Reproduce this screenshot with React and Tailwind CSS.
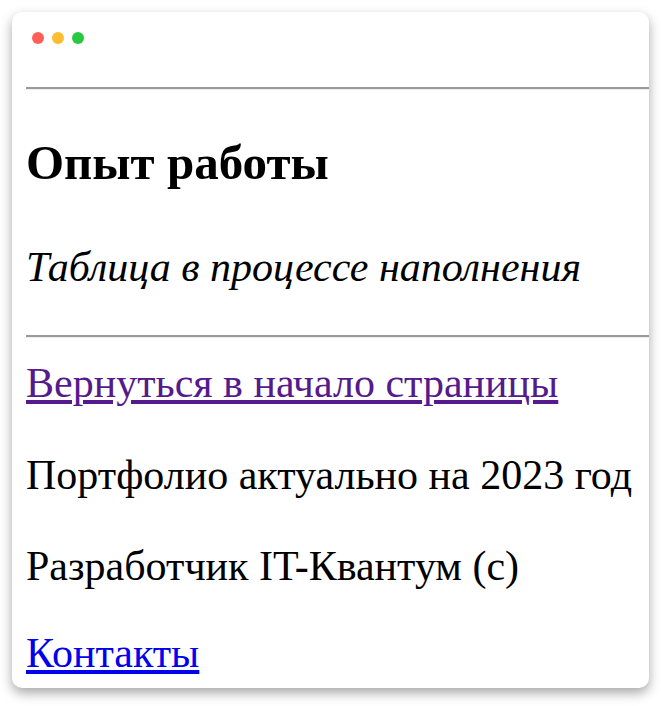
export default function App() {
  return (
    <div className="min-h-screen bg-white p-3 font-['Liberation_Serif','Times_New_Roman',serif] text-black">
      <div className="h-[676px] w-[637px] overflow-hidden rounded-[10px] bg-white shadow-[0_5px_12px_rgba(0,0,0,0.35)]">
        {/* title bar */}
        <div className="flex gap-2 pl-5 pt-5">
          <span className="h-3 w-3 rounded-full bg-[#ff5f57]" />
          <span className="h-3 w-3 rounded-full bg-[#febc2e]" />
          <span className="h-3 w-3 rounded-full bg-[#28c840]" />
        </div>

        <div className="pl-[14px] text-[42px] leading-[48px]">
          <hr className="mt-[43px] border-t-2 border-b border-t-[#9a9a9a] border-b-[#eeeeee]" />
          <h3 className="mt-[45px] text-[49px] font-bold leading-[56px]">Опыт работы</h3>
          <p className="mt-[52px] italic">Таблица в процессе наполнения</p>
          <hr className="mt-[44px] border-t-2 border-b border-t-[#9a9a9a] border-b-[#eeeeee]" />
          <a href="#top" className="mt-[21px] block w-max text-[#551a8b] underline">
            Вернуться в начало страницы
          </a>
          <p className="mt-[44px] whitespace-nowrap">Портфолио актуально на 2023 год</p>
          <p className="mt-[43px]">Разработчик IT-Квантум (c)</p>
          <a href="#contacts" className="mt-[39px] block w-max text-[#0000ee] underline">
            Контакты
          </a>
        </div>
      </div>
    </div>
  );
}
